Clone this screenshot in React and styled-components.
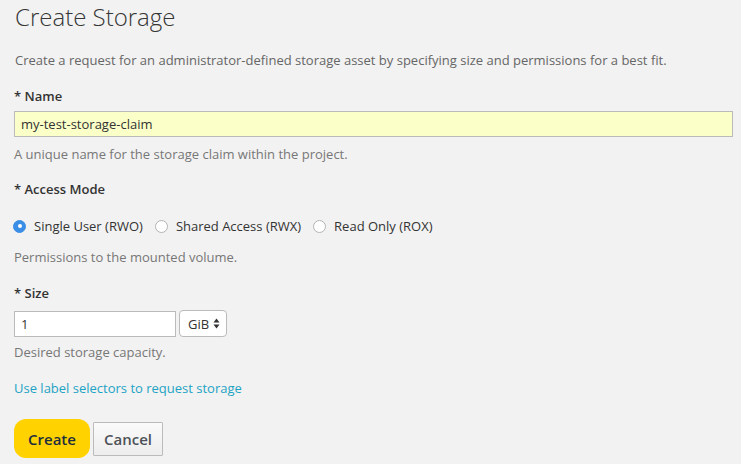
import styled, { createGlobalStyle } from 'styled-components';

const GlobalStyle = createGlobalStyle`
  html, body {
    margin: 0;
    background: #f2f2f2;
  }
  body {
    font-family: "Open Sans", "Liberation Sans", sans-serif;
    color: #333;
  }
`;

const Page = styled.div`
  padding: 0 8px 0 14px;
`;

const Title = styled.h1`
  margin: 4px 0 0 1px;
  font-size: 24px;
  line-height: 26px;
  font-weight: 300;
  color: #363636;
`;

const Intro = styled.p`
  margin: 21px 0 0 1px;
  font-size: 13px;
  line-height: 18px;
  color: #666;
`;

const Field = styled.div`
  margin-top: ${(p) => p.gap}px;
`;

const Label = styled.div`
  font-size: 13px;
  line-height: 18px;
  font-weight: 600;
  color: #333;
  margin-bottom: ${(p) => p.below || 0}px;
  &::before {
    content: '* ';
  }
`;

const TextInput = styled.input`
  box-sizing: border-box;
  display: block;
  width: ${(p) => p.width || '100%'};
  height: 26px;
  padding: 0 6px;
  border: 1px solid #bbb;
  background: ${(p) => (p.filled ? '#fbffc8' : '#fff')};
  font-family: inherit;
  font-size: 13px;
  color: #333;
  outline: none;
`;

const Help = styled.div`
  margin-top: ${(p) => p.gap}px;
  font-size: 13px;
  line-height: 18px;
  color: #777;
`;

const RadioRow = styled.div`
  display: flex;
  align-items: center;
  gap: 12px;
  margin: 19px 0 0 -1px;
`;

const RadioOption = styled.label`
  display: flex;
  align-items: center;
  gap: 8px;
  font-size: 13px;
  line-height: 18px;
  color: #333;
`;

const RadioDot = styled.span`
  box-sizing: border-box;
  width: 13px;
  height: 13px;
  border-radius: 50%;
  border: 1px solid ${(p) => (p.checked ? '#3a8ee6' : '#b4b4b4')};
  background: ${(p) => (p.checked ? '#3a8ee6' : '#fff')};
  display: flex;
  align-items: center;
  justify-content: center;
  &::after {
    content: '';
    width: 4px;
    height: 4px;
    border-radius: 50%;
    background: #fff;
    display: ${(p) => (p.checked ? 'block' : 'none')};
  }
`;

const SizeRow = styled.div`
  display: flex;
  align-items: center;
  gap: 3px;
`;

const Select = styled.div`
  box-sizing: border-box;
  height: 27px;
  padding: 0 6px 0 8px;
  display: flex;
  align-items: center;
  gap: 4px;
  border: 1px solid #bbb;
  border-radius: 4px;
  background: #fff;
  font-size: 13px;
  color: #333;
`;

const Link = styled.a`
  display: block;
  margin-top: 18px;
  font-size: 13px;
  line-height: 18px;
  font-weight: 500;
  color: #1ea3c4;
  text-decoration: none;
`;

const Actions = styled.div`
  display: flex;
  align-items: center;
  gap: 3px;
  margin-top: 22px;
`;

const Button = styled.button`
  box-sizing: border-box;
  font-family: inherit;
  font-size: 15px;
  font-weight: 600;
  cursor: pointer;
  ${(p) =>
    p.primary
      ? `
    height: 39px;
    width: 76px;
    padding: 0;
    border: none;
    border-radius: 12px;
    background: #ffd200;
    color: #1d2e3e;
  `
      : `
    height: 34px;
    width: 70px;
    padding: 0;
    border: 1px solid #bbb;
    border-radius: 1px;
    background: linear-gradient(#fafafa, #ededed);
    color: #4d5258;
  `}
`;

const Arrows = () => (
  <svg width="7" height="11" viewBox="0 0 7 11">
    <path d="M3.5 0.5 L6.5 4.5 H0.5 Z" fill="#333" />
    <path d="M3.5 10.5 L6.5 6.5 H0.5 Z" fill="#333" />
  </svg>
);

const modes = [
  { label: 'Single User (RWO)', checked: true },
  { label: 'Shared Access (RWX)' },
  { label: 'Read Only (ROX)' },
];

export default function App() {
  return (
    <>
      <GlobalStyle />
      <Page>
        <Title>Create Storage</Title>
        <Intro>
          Create a request for an administrator-defined storage asset by specifying size and
          permissions for a best fit.
        </Intro>

        <Field gap={18}>
          <Label below={6}>Name</Label>
          <TextInput filled defaultValue="my-test-storage-claim" />
          <Help gap={8}>A unique name for the storage claim within the project.</Help>
        </Field>

        <Field gap={17}>
          <Label>Access Mode</Label>
          <RadioRow>
            {modes.map((m) => (
              <RadioOption key={m.label}>
                <RadioDot checked={m.checked} />
                {m.label}
              </RadioOption>
            ))}
          </RadioRow>
          <Help gap={13}>Permissions to the mounted volume.</Help>
        </Field>

        <Field gap={18}>
          <Label below={8}>Size</Label>
          <SizeRow>
            <TextInput width="162px" defaultValue="1" />
            <Select>
              GiB
              <Arrows />
            </Select>
          </SizeRow>
          <Help gap={6}>Desired storage capacity.</Help>
        </Field>

        <Link href="#">Use label selectors to request storage</Link>

        <Actions>
          <Button primary>Create</Button>
          <Button>Cancel</Button>
        </Actions>
      </Page>
    </>
  );
}
